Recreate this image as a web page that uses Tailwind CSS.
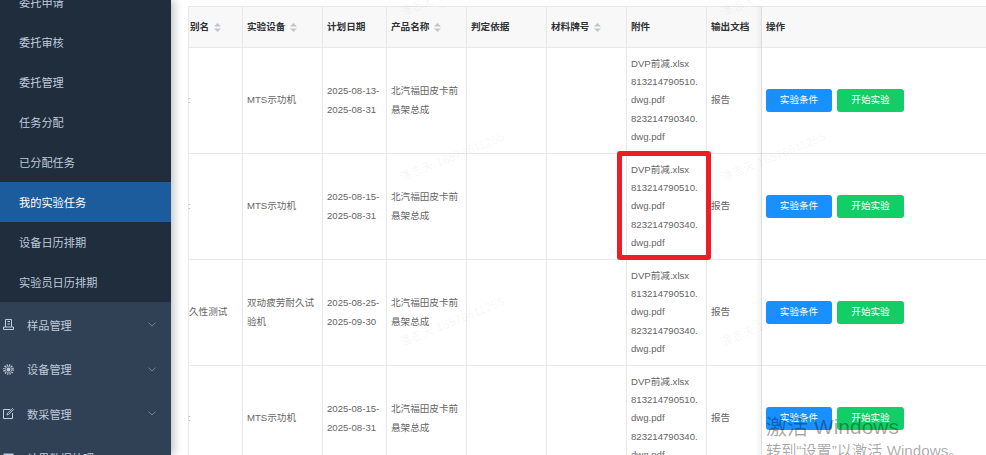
<!DOCTYPE html>
<html lang="zh-CN">
  <head>
    <meta charset="UTF-8" />
    <title>我的实验任务</title>
    <script src="https://cdn.jsdelivr.net/npm/@tailwindcss/browser@4"></script>
  </head>
  <body class="overflow-hidden bg-white font-['Liberation_Sans','Noto_Sans_CJK_SC',sans-serif]">
    <div class="flex h-[455px] w-[986px] overflow-hidden relative">
      <!-- Sidebar -->
      <aside class="w-[171px] shrink-0 bg-[#304156] text-[11.2px] text-[#bfcbd9] shadow-[3px_0_8px_rgba(0,21,41,0.25)] z-10 overflow-hidden">
        <div class="-mt-[18px] bg-[#1f2d3d]">
          <div class="h-10 flex items-center pl-[19px] pt-[3px]">委托申请</div>
          <div class="h-10 flex items-center pl-[19px] pt-[3px]">委托审核</div>
          <div class="h-10 flex items-center pl-[19px] pt-[3px]">委托管理</div>
          <div class="h-10 flex items-center pl-[19px] pt-[3px]">任务分配</div>
          <div class="h-10 flex items-center pl-[19px] pt-[3px]">已分配任务</div>
          <div class="h-10 flex items-center pl-[19px] pt-[3px] bg-[#1c5c9c] text-white">我的实验任务</div>
          <div class="h-10 flex items-center pl-[19px] pt-[3px]">设备日历排期</div>
          <div class="h-10 flex items-center pl-[19px] pt-[3px]">实验员日历排期</div>
        </div>
        <div class="pt-[2px]">
          <div class="h-[44.5px] flex items-center pl-[3px] pr-[15px]">
            <svg class="w-[11px] h-[11px] mr-[13px] -mt-[3px]" viewBox="0 0 11 11" fill="none" stroke="#bfcbd9" stroke-width="1"><path d="M2.5 8V0.5h6V8M4.5 2.5h2.5M4.5 5h2.5M0.5 10.5h10V8h-10z"/></svg>
            <span class="flex-1">样品管理</span>
            <svg class="w-2 h-2 -mt-[4px]" viewBox="0 0 8 8" fill="none" stroke="#7f8fa3" stroke-width="0.8"><path d="M0.5 2.5L4 6l3.5-3.5"/></svg>
          </div>
          <div class="h-[44.5px] flex items-center pl-[3px] pr-[15px]">
            <svg class="w-[11px] h-[11px] mr-[13px] -mt-[3px]" viewBox="0 0 11 11" fill="none" stroke="#bfcbd9"><circle cx="5.5" cy="5.5" r="1.9" fill="#bfcbd9" stroke="none"/><circle cx="5.5" cy="5.5" r="3.2" stroke-width="0.7"/><circle cx="5.5" cy="5.5" r="4.6" stroke-width="1.5" stroke-dasharray="1.3 1.1"/></svg>
            <span class="flex-1">设备管理</span>
            <svg class="w-2 h-2 -mt-[4px]" viewBox="0 0 8 8" fill="none" stroke="#7f8fa3" stroke-width="0.8"><path d="M0.5 2.5L4 6l3.5-3.5"/></svg>
          </div>
          <div class="h-[44.5px] flex items-center pl-[3px] pr-[15px]">
            <svg class="w-[11px] h-[11px] mr-[13px] -mt-[3px]" viewBox="0 0 11 11" fill="none" stroke="#bfcbd9" stroke-width="1"><path d="M7 1.5H0.5v9h9V5M4 7l0.5-1.8L9.5 0.5l1 1L5.6 6.5z"/></svg>
            <span class="flex-1">数采管理</span>
            <svg class="w-2 h-2 -mt-[4px]" viewBox="0 0 8 8" fill="none" stroke="#7f8fa3" stroke-width="0.8"><path d="M0.5 2.5L4 6l3.5-3.5"/></svg>
          </div>
          <div class="h-[44.5px] flex items-center pl-[3px] pr-[15px]">
            <svg class="w-[11px] h-[11px] mr-[13px] -mt-[3px]" viewBox="0 0 11 11" fill="#bfcbd9"><rect x="0.5" y="0.5" width="10" height="10"/></svg>
            <span class="flex-1">结果数据处理</span>
          </div>
        </div>
      </aside>

      <!-- Main -->
      <main class="flex-1 pl-[17px] pt-[6px] relative overflow-hidden">
        <table class="table-fixed border-collapse w-[800px] text-[9.6px] leading-[18.3px] text-[#666666]">
          <colgroup>
            <col class="w-[54px]" />
            <col class="w-[80px]" />
            <col class="w-[64px]" />
            <col class="w-[80px]" />
            <col class="w-[80px]" />
            <col class="w-[80px]" />
            <col class="w-[80px]" />
            <col class="w-[55px]" />
            <col class="w-[227px]" />
          </colgroup>
          <thead class="bg-[#f8f8f9] text-[#303133] font-bold">
            <tr class="h-[41px]">
              <th class="border border-[#e6e8eb] pl-[1px] text-left font-bold">别名 <svg class="inline w-[7px] h-[9px] ml-[2px]" viewBox="0 0 7 9" fill="#c0c4cc"><path d="M3.5 0L7 3.5H0zM3.5 9L0 5.5h7z"/></svg></th>
              <th class="border border-[#e6e8eb] pl-[4px] text-left font-bold">实验设备 <svg class="inline w-[7px] h-[9px] ml-[2px]" viewBox="0 0 7 9" fill="#c0c4cc"><path d="M3.5 0L7 3.5H0zM3.5 9L0 5.5h7z"/></svg></th>
              <th class="border border-[#e6e8eb] pl-[4px] text-left font-bold">计划日期</th>
              <th class="border border-[#e6e8eb] pl-[4px] text-left font-bold">产品名称 <svg class="inline w-[7px] h-[9px] ml-[2px]" viewBox="0 0 7 9" fill="#c0c4cc"><path d="M3.5 0L7 3.5H0zM3.5 9L0 5.5h7z"/></svg></th>
              <th class="border border-[#e6e8eb] pl-[4px] text-left font-bold">判定依据</th>
              <th class="border border-[#e6e8eb] pl-[4px] text-left font-bold">材料牌号 <svg class="inline w-[7px] h-[9px] ml-[2px]" viewBox="0 0 7 9" fill="#c0c4cc"><path d="M3.5 0L7 3.5H0zM3.5 9L0 5.5h7z"/></svg></th>
              <th class="border border-[#e6e8eb] pl-[4px] text-left font-bold">附件</th>
              <th class="border border-[#e6e8eb] pl-[4px] text-left font-bold">输出文档</th>
              <th class="border border-[#e6e8eb] pl-[4px] text-left font-bold">操作</th>
            </tr>
          </thead>
          <tbody>
            <tr class="h-[106px]">
              <td class="border border-[#e6e8eb] pl-0"><span class="-ml-[1px] text-[#a0a4aa]">:</span></td>
              <td class="border border-[#e6e8eb] pl-[4px] pr-[5px]">MTS示功机</td>
              <td class="border border-[#e6e8eb] pl-[4px] pr-[5px]">2025-08-13-<br />2025-08-31</td>
              <td class="border border-[#e6e8eb] pl-[4px] pr-[5px]">北汽福田皮卡前悬架总成</td>
              <td class="border border-[#e6e8eb]"></td>
              <td class="border border-[#e6e8eb]"></td>
              <td class="border border-[#e6e8eb] pl-[4px] pr-[5px]">DVP前减.xlsx<br />813214790510.<wbr />dwg.pdf<br />823214790340.<wbr />dwg.pdf</td>
              <td class="border border-[#e6e8eb] pl-[4px]">报告</td>
              <td class="border border-[#e6e8eb] pl-[4px]">
                <div class="flex gap-[5px]">
                  <button class="w-[66px] h-[23px] rounded-[3px] bg-[#1890ff] text-white">实验条件</button>
                  <button class="w-[67px] h-[23px] rounded-[3px] bg-[#13ce66] text-white">开始实验</button>
                </div>
              </td>
            </tr>
            <tr class="h-[106px]">
              <td class="border border-[#e6e8eb] pl-0"><span class="-ml-[1px] text-[#a0a4aa]">:</span></td>
              <td class="border border-[#e6e8eb] pl-[4px] pr-[5px]">MTS示功机</td>
              <td class="border border-[#e6e8eb] pl-[4px] pr-[5px]">2025-08-15-<br />2025-08-31</td>
              <td class="border border-[#e6e8eb] pl-[4px] pr-[5px]">北汽福田皮卡前悬架总成</td>
              <td class="border border-[#e6e8eb]"></td>
              <td class="border border-[#e6e8eb]"></td>
              <td class="border border-[#e6e8eb] pl-[4px] pr-[5px]">DVP前减.xlsx<br />813214790510.<wbr />dwg.pdf<br />823214790340.<wbr />dwg.pdf</td>
              <td class="border border-[#e6e8eb] pl-[4px]">报告</td>
              <td class="border border-[#e6e8eb] pl-[4px]">
                <div class="flex gap-[5px]">
                  <button class="w-[66px] h-[23px] rounded-[3px] bg-[#1890ff] text-white">实验条件</button>
                  <button class="w-[67px] h-[23px] rounded-[3px] bg-[#13ce66] text-white">开始实验</button>
                </div>
              </td>
            </tr>
            <tr class="h-[106px]">
              <td class="border border-[#e6e8eb] pl-0">久性测试</td>
              <td class="border border-[#e6e8eb] pl-[4px] pr-[5px]">双动疲劳耐久试验机</td>
              <td class="border border-[#e6e8eb] pl-[4px] pr-[5px]">2025-08-25-<br />2025-09-30</td>
              <td class="border border-[#e6e8eb] pl-[4px] pr-[5px]">北汽福田皮卡前悬架总成</td>
              <td class="border border-[#e6e8eb]"></td>
              <td class="border border-[#e6e8eb]"></td>
              <td class="border border-[#e6e8eb] pl-[4px] pr-[5px]">DVP前减.xlsx<br />813214790510.<wbr />dwg.pdf<br />823214790340.<wbr />dwg.pdf</td>
              <td class="border border-[#e6e8eb] pl-[4px]">报告</td>
              <td class="border border-[#e6e8eb] pl-[4px]">
                <div class="flex gap-[5px]">
                  <button class="w-[66px] h-[23px] rounded-[3px] bg-[#1890ff] text-white">实验条件</button>
                  <button class="w-[67px] h-[23px] rounded-[3px] bg-[#13ce66] text-white">开始实验</button>
                </div>
              </td>
            </tr>
            <tr class="h-[106px]">
              <td class="border border-[#e6e8eb] pl-0"><span class="-ml-[1px] text-[#a0a4aa]">:</span></td>
              <td class="border border-[#e6e8eb] pl-[4px] pr-[5px]">MTS示功机</td>
              <td class="border border-[#e6e8eb] pl-[4px] pr-[5px]">2025-08-15-<br />2025-08-31</td>
              <td class="border border-[#e6e8eb] pl-[4px] pr-[5px]">北汽福田皮卡前悬架总成</td>
              <td class="border border-[#e6e8eb]"></td>
              <td class="border border-[#e6e8eb]"></td>
              <td class="border border-[#e6e8eb] pl-[4px] pr-[5px]">DVP前减.xlsx<br />813214790510.<wbr />dwg.pdf<br />823214790340.<wbr />dwg.pdf</td>
              <td class="border border-[#e6e8eb] pl-[4px]">报告</td>
              <td class="border border-[#e6e8eb] pl-[4px]">
                <div class="flex gap-[5px]">
                  <button class="w-[66px] h-[23px] rounded-[3px] bg-[#1890ff] text-white">实验条件</button>
                  <button class="w-[67px] h-[23px] rounded-[3px] bg-[#13ce66] text-white">开始实验</button>
                </div>
              </td>
            </tr>
          </tbody>
        </table>
        <!-- fixed column edge -->
        <div class="absolute left-[584px] top-[6px] bottom-0 w-[7px] bg-gradient-to-r from-transparent to-black/[0.05]"></div>

        <!-- user watermark -->
        <span class="absolute left-[225px] top-[148px] -rotate-[22deg] text-[12px] text-black/[0.05] whitespace-nowrap pointer-events-none">潘志天 18576611255</span>
        <span class="absolute left-[546px] top-[148px] -rotate-[22deg] text-[12px] text-black/[0.05] whitespace-nowrap pointer-events-none">潘志天 18576611255</span>
        <span class="absolute left-[225px] top-[313px] -rotate-[22deg] text-[12px] text-black/[0.05] whitespace-nowrap pointer-events-none">潘志天 18576611255</span>
        <span class="absolute left-[546px] top-[313px] -rotate-[22deg] text-[12px] text-black/[0.05] whitespace-nowrap pointer-events-none">潘志天 18576611255</span>
        <span class="absolute left-[225px] -top-[17px] -rotate-[22deg] text-[12px] text-black/[0.05] whitespace-nowrap pointer-events-none">潘志天 18576611255</span>
        <span class="absolute left-[546px] -top-[17px] -rotate-[22deg] text-[12px] text-black/[0.05] whitespace-nowrap pointer-events-none">潘志天 18576611255</span>
      </main>

      <!-- Red annotation -->
      <div class="absolute left-[617px] top-[151px] w-[94px] h-[109px] border-[5px] border-[#ee1c25] rounded-[3px] z-20"></div>

      <!-- Windows activation watermark -->
      <div class="absolute left-[766px] top-[416px] z-30 text-black/35 leading-none whitespace-nowrap">
        <div class="text-[21px]">激活 Windows</div>
        <div class="text-[15.2px] mt-[6px]">转到“设置”以激活 Windows。</div>
      </div>
    </div>
  </body>
</html>
